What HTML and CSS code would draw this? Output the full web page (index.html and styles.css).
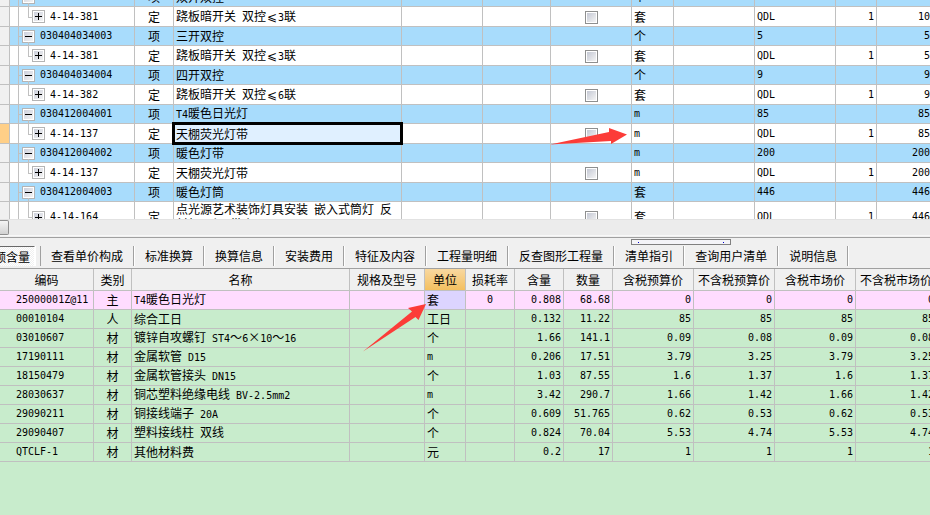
FILE: index.html
```html
<!DOCTYPE html>
<html lang="zh-CN">
<head>
<meta charset="utf-8">
<title>工程量清单</title>
<link rel="stylesheet" href="styles.css">
</head>
<body>
<main class="app">
<section class="pane">
<table class="grid bill">
<colgroup><col class="w10"><col class="w9"><col class="w116"><col class="w39"><col class="w228"><col class="w81"><col class="w68"><col class="w81"><col class="w42"><col class="w81"><col class="w81"><col class="w41"><col></colgroup>
<tbody>
<tr class="item"><th></th><td></td><td class="code"><button class="toggle minus" aria-label="折叠"></button>030404034002</td><td class="mid">项</td><td>双开双控</td><td></td><td></td><td></td><td>个</td><td></td><td class="num">10</td><td></td><td class="num end">10</td></tr>
<tr class="sub"><th></th><td></td><td class="code"><button class="toggle plus" aria-label="展开"></button>4-14-381</td><td class="mid">定</td><td>跷板暗开关<span class="num"> </span>双控<span class="wide">⩽</span><span class="num">3</span>联</td><td></td><td></td><td class="mid"><input type="checkbox" aria-label="选择"></td><td>套</td><td></td><td class="num">QDL</td><td class="num right">1</td><td class="num end">10</td></tr>
<tr class="item"><th></th><td></td><td class="code"><button class="toggle minus" aria-label="折叠"></button>030404034003</td><td class="mid">项</td><td>三开双控</td><td></td><td></td><td></td><td>个</td><td></td><td class="num">5</td><td></td><td class="num end">5</td></tr>
<tr class="sub"><th></th><td></td><td class="code"><button class="toggle plus" aria-label="展开"></button>4-14-381</td><td class="mid">定</td><td>跷板暗开关<span class="num"> </span>双控<span class="wide">⩽</span><span class="num">3</span>联</td><td></td><td></td><td class="mid"><input type="checkbox" aria-label="选择"></td><td>套</td><td></td><td class="num">QDL</td><td class="num right">1</td><td class="num end">5</td></tr>
<tr class="item"><th></th><td></td><td class="code"><button class="toggle minus" aria-label="折叠"></button>030404034004</td><td class="mid">项</td><td>四开双控</td><td></td><td></td><td></td><td>个</td><td></td><td class="num">9</td><td></td><td class="num end">9</td></tr>
<tr class="sub"><th></th><td></td><td class="code"><button class="toggle plus" aria-label="展开"></button>4-14-382</td><td class="mid">定</td><td>跷板暗开关<span class="num"> </span>双控<span class="wide">⩽</span><span class="num">6</span>联</td><td></td><td></td><td class="mid"><input type="checkbox" aria-label="选择"></td><td>套</td><td></td><td class="num">QDL</td><td class="num right">1</td><td class="num end">9</td></tr>
<tr class="item"><th></th><td></td><td class="code"><button class="toggle minus" aria-label="折叠"></button>030412004001</td><td class="mid">项</td><td><span class="num">T4</span>暖色日光灯</td><td></td><td></td><td></td><td class="num">m</td><td></td><td class="num">85</td><td></td><td class="num end">85</td></tr>
<tr class="sub"><th class="current"></th><td></td><td class="code"><button class="toggle plus" aria-label="展开"></button>4-14-137</td><td class="mid">定</td><td class="selected">天棚荧光灯带</td><td></td><td></td><td class="mid"><input type="checkbox" aria-label="选择"></td><td class="num">m</td><td></td><td class="num">QDL</td><td class="num right">1</td><td class="num end">85</td></tr>
<tr class="item"><th></th><td></td><td class="code"><button class="toggle minus" aria-label="折叠"></button>030412004002</td><td class="mid">项</td><td>暖色灯带</td><td></td><td></td><td></td><td class="num">m</td><td></td><td class="num">200</td><td></td><td class="num end">200</td></tr>
<tr class="sub"><th></th><td></td><td class="code"><button class="toggle plus" aria-label="展开"></button>4-14-137</td><td class="mid">定</td><td>天棚荧光灯带</td><td></td><td></td><td class="mid"><input type="checkbox" aria-label="选择"></td><td class="num">m</td><td></td><td class="num">QDL</td><td class="num right">1</td><td class="num end">200</td></tr>
<tr class="item"><th></th><td></td><td class="code"><button class="toggle minus" aria-label="折叠"></button>030412004003</td><td class="mid">项</td><td>暖色灯筒</td><td></td><td></td><td></td><td>套</td><td></td><td class="num">446</td><td></td><td class="num end">446</td></tr>
<tr class="sub tall"><th></th><td></td><td class="code"><button class="toggle plus" aria-label="展开"></button>4-14-164</td><td class="mid">定</td><td class="wrap">点光源艺术装饰灯具安装<span class="num"> </span>嵌入式筒灯<span class="num"> </span>反<br>射灯吊径<span class="num"> </span>带小于</td><td></td><td></td><td class="mid"><input type="checkbox" aria-label="选择"></td><td>套</td><td></td><td class="num">QDL</td><td class="num right">1</td><td class="num end">446</td></tr>
</tbody>
</table>
</section>
<div class="scrollbar"><div class="thumb"></div></div>
<div class="splitter"><div class="grip"></div></div>
<nav class="tabs">
<button class="tab active">定额含量</button><button class="tab">查看单价构成</button><button class="tab">标准换算</button><button class="tab">换算信息</button><button class="tab">安装费用</button><button class="tab">特征及内容</button><button class="tab">工程量明细</button><button class="tab">反查图形工程量</button><button class="tab">清单指引</button><button class="tab">查询用户清单</button><button class="tab">说明信息</button>
</nav>
<section class="detail">
<table class="grid res">
<colgroup><col class="w94"><col class="w38"><col class="w218"><col class="w75"><col class="w41"><col class="w49"><col class="w49"><col class="w49"><col class="w81"><col class="w81"><col class="w81"><col></colgroup>
<thead>
<tr><th>编码</th><th>类别</th><th>名称</th><th>规格及型号</th><th class="hot">单位</th><th>损耗率</th><th>含量</th><th>数量</th><th>含税预算价</th><th>不含税预算价</th><th>含税市场价</th><th>不含税市场价</th></tr>
</thead>
<tbody>
<tr class="main"><td class="num id">25000001Z@11</td><td class="mid">主</td><td><span class="num">T4</span>暖色日光灯</td><td></td><td class="pick">套</td><td class="num mid">0</td><td class="num right">0.808</td><td class="num right">68.68</td><td class="num right">0</td><td class="num right">0</td><td class="num right">0</td><td class="num right">0</td></tr>
<tr><td class="num id">00010104</td><td class="mid">人</td><td>综合工日</td><td></td><td>工日</td><td></td><td class="num right">0.132</td><td class="num right">11.22</td><td class="num right">85</td><td class="num right">85</td><td class="num right">85</td><td class="num right">85</td></tr>
<tr><td class="num id">03010607</td><td class="mid">材</td><td>镀锌自攻螺钉<span class="num"> ST4</span>～<span class="num">6</span><span class="wide">×</span><span class="num">10</span>～<span class="num">16</span></td><td></td><td>个</td><td></td><td class="num right">1.66</td><td class="num right">141.1</td><td class="num right">0.09</td><td class="num right">0.08</td><td class="num right">0.09</td><td class="num right">0.08</td></tr>
<tr><td class="num id">17190111</td><td class="mid">材</td><td>金属软管<span class="num"> D15</span></td><td></td><td class="num">m</td><td></td><td class="num right">0.206</td><td class="num right">17.51</td><td class="num right">3.79</td><td class="num right">3.25</td><td class="num right">3.79</td><td class="num right">3.25</td></tr>
<tr><td class="num id">18150479</td><td class="mid">材</td><td>金属软管接头<span class="num"> DN15</span></td><td></td><td>个</td><td></td><td class="num right">1.03</td><td class="num right">87.55</td><td class="num right">1.6</td><td class="num right">1.37</td><td class="num right">1.6</td><td class="num right">1.37</td></tr>
<tr><td class="num id">28030637</td><td class="mid">材</td><td>铜芯塑料绝缘电线<span class="num"> BV-2.5mm2</span></td><td></td><td class="num">m</td><td></td><td class="num right">3.42</td><td class="num right">290.7</td><td class="num right">1.66</td><td class="num right">1.42</td><td class="num right">1.66</td><td class="num right">1.42</td></tr>
<tr><td class="num id">29090211</td><td class="mid">材</td><td>铜接线端子<span class="num"> 20A</span></td><td></td><td>个</td><td></td><td class="num right">0.609</td><td class="num right">51.765</td><td class="num right">0.62</td><td class="num right">0.53</td><td class="num right">0.62</td><td class="num right">0.53</td></tr>
<tr><td class="num id">29090407</td><td class="mid">材</td><td>塑料接线柱<span class="num"> </span>双线</td><td></td><td>个</td><td></td><td class="num right">0.824</td><td class="num right">70.04</td><td class="num right">5.53</td><td class="num right">4.74</td><td class="num right">5.53</td><td class="num right">4.74</td></tr>
<tr><td class="num id">QTCLF-1</td><td class="mid">材</td><td>其他材料费</td><td></td><td>元</td><td></td><td class="num right">0.2</td><td class="num right">17</td><td class="num right">1</td><td class="num right">1</td><td class="num right">1</td><td class="num right">1</td></tr>
</tbody>
</table>
</section>
<svg class="arrows" width="930" height="515" viewBox="0 0 930 515" aria-hidden="true">
<path d="M550 144.500 609 132 609 128 627 134.500 611 144 611 141Z"/>
<path d="M363 351.500 412 311.500 408 308 426 304 418.500 320 415.500 317Z"/>
</svg>
</main>
</body>
</html>
```
FILE: styles.css
```css
* { box-sizing: border-box; }
body {
  margin: 0;
  height: 100vh;
  background: #f0f0f0;
  color: #000;
  font: 12px/16px "Noto Sans CJK SC", sans-serif;
  overflow: hidden;
}
button { font: inherit; color: inherit; }
.app { position: relative; display: flex; flex-direction: column; height: 100%; }
.pane { flex: 0 0 219px; overflow: hidden; background: #fff; }

.grid { width: 100%; table-layout: fixed; border-collapse: separate; border-spacing: 0; }
.grid td, .grid th {
  height: 19px;
  padding: 0 2px;
  border-right: 1px solid #c0c0c0;
  border-bottom: 1px solid #c0c0c0;
  font-weight: normal;
  line-height: 16px;
  white-space: nowrap;
  overflow: hidden;
  vertical-align: middle;
}
.grid .num { font-family: "DejaVu Sans Mono", monospace; font-size: 10px; white-space: pre; }
.grid .mid { text-align: center; padding: 0; }
.grid .right { text-align: right; padding-right: 2px; }
.grid .end { text-align: right; padding: 0; border-right: 0; }
.wide { display: inline-block; width: 12px; text-align: center; }

.w9 { width: 9px; } .w10 { width: 10px; } .w38 { width: 38px; } .w39 { width: 39px; }
.w41 { width: 41px; } .w42 { width: 42px; } .w49 { width: 49px; } .w68 { width: 68px; }
.w75 { width: 75px; } .w81 { width: 81px; } .w94 { width: 94px; } .w116 { width: 116px; }
.w218 { width: 218px; } .w228 { width: 228px; }

.bill { margin-top: -12px; }
.bill th { background: #f0f0f0; }
.bill th.current { background: #ffcf87; }
.bill .item td { background: #a8dcfc; }
.bill .sub td { height: 20px; background: #fff; }
.bill .tall td { height: 31px; }
.bill .tall .wrap { line-height: 13px; }
.grid .code {
  position: relative;
  padding-left: 3px;
  font-family: "DejaVu Sans Mono", monospace;
  font-size: 10px;
}
.bill .sub .code { padding-left: 13px; }
.bill .item .code::before {
  content: "";
  position: absolute;
  left: 0; top: 9px;
  width: 3px;
  border-top: 1px solid #c0c0c0;
}
.bill .item .code::after {
  content: "";
  position: absolute;
  left: 9px; top: 15px; bottom: 0;
  border-left: 1px solid #c0c0c0;
}
.bill .sub .code::before {
  content: "";
  position: absolute;
  left: 9px; top: 0;
  width: 4px; height: 50%;
  border: solid #c0c0c0;
  border-width: 0 0 1px 1px;
}
.toggle, .bill input {
  appearance: none;
  width: 13px; height: 13px;
  margin: 0;
  padding: 0;
  border: 1px solid #b8b8b8;
  background: linear-gradient(135deg, #c4c8d4, #f4f4f4) content-box, #fff;
  vertical-align: middle;
}
.toggle {
  margin-right: 5px;
  border-color: #b4b4b4;
  padding: 1px;
  background:
    linear-gradient(#000, #000) center / 7px 1px no-repeat,
    linear-gradient(135deg, #ccd0dc, #f4f4f4) content-box,
    #fff;
}
.toggle.plus {
  background:
    linear-gradient(#000, #000) center / 7px 1px no-repeat,
    linear-gradient(#000, #000) center / 1px 7px no-repeat,
    linear-gradient(135deg, #ccd0dc, #f4f4f4) content-box,
    #fff;
}
.bill input { display: block; margin: 1px auto 0; padding: 1px; border-color: #8e8f8f; }
.bill .sub .selected { position: relative; overflow: visible; background: #e0f0ff; }
.selected::after {
  content: "";
  position: absolute;
  inset: -2px;
  border: 3px solid #000;
}

.scrollbar {
  flex: 0 0 17px;
  border-top: 1px solid #e2e2e2;
  border-bottom: 1px solid #f8f8f8;
  background: #ececec;
}
.thumb {
  width: 9px; height: 15px;
  border: 1px solid #8f8f8f;
  border-left: 0;
  border-radius: 0 2px 2px 0;
  background: linear-gradient(#f4f4f4, #d2d2d2);
}
.splitter { position: relative; flex: 0 0 9px; padding-top: 1px; background: #f0f0f0; }
.splitter::before { content: ""; display: block; height: 1px; background: #a0a0a0; }
.grip {
  position: absolute;
  left: 631px; top: 3px;
  width: 100px; height: 6px;
  border: 1px solid #808080;
  background: #f4f4f8;
}
.grip::before, .grip::after { content: ""; position: absolute; top: 2px; width: 1px; height: 1px; background: #00c; }
.grip::before { left: 6px; }
.grip::after { right: 6px; }

.tabs { display: flex; flex: 0 0 24px; align-items: flex-start; border-bottom: 1px solid #a0a0a0; padding: 1px 0 2px; }
.tab {
  flex: none;
  height: 20px;
  padding: 0 10px;
  border: 0;
  border-right: 1px solid #a0a0a0;
  box-shadow: 1px 0 #fff;
  background: none;
  white-space: nowrap;
  margin-right: 1px;
}
.tab.active {
  width: 35px;
  margin-right: 5px;
  padding: 0 4px;
  border-right: 1px solid #fff;
  border-top: 1px solid #696969;
  background: repeating-conic-gradient(#fff 0 25%, #f0f0f0 0 50%) 0 0 / 2px 2px;
  display: flex;
  align-items: center;
  justify-content: flex-end;
  overflow: hidden;
}
.tab.active + .tab { border-left: 1px solid #a0a0a0; }

.detail { flex: 1; overflow: hidden; background: #c8eccc; }
.res { width: calc(100% + 7px); }
.res thead th { height: 22px; padding: 0; background: #f0f0f0; }
.res thead .hot { background: linear-gradient(#f8d8a0, #f4c060); }
.res .main td { background: #ffdcff; }
.res .main .pick { background: #dcd4ff; }
.res .id { padding-left: 16px; }

.arrows { position: absolute; left: 0; top: 0; pointer-events: none; fill: #fc3c38; }
```
